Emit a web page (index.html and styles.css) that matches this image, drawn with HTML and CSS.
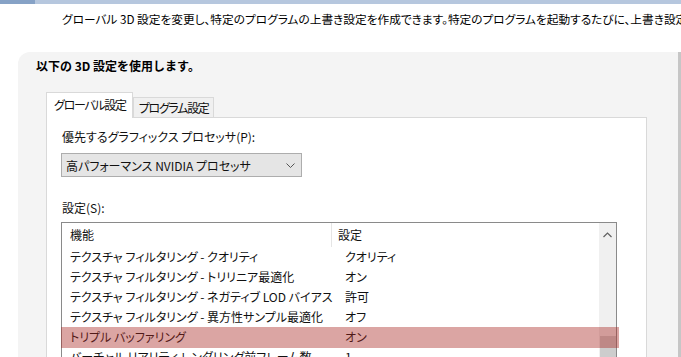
FILE: index.html
```html
<!DOCTYPE html>
<html lang="ja">
<head>
<meta charset="utf-8">
<link rel="stylesheet" href="styles.css">
</head>
<body>
<div class="topbar"><div class="topbar-dark"></div></div>
<p class="desc">グローバル 3D 設定を変更し、特定のプログラムの上書き設定を作成できます。特定のプログラムを起動するたびに、上書き設定が自動的に使用されます。</p>
<div class="panel">
  <h2 class="panel-title">以下の 3D 設定を使用します。</h2>
  <div class="tabs">
    <div class="tab active">グローバル設定</div>
    <div class="tab">プログラム設定</div>
  </div>
  <div class="tabpage">
    <label class="label">優先するグラフィックス プロセッサ(P):</label>
    <div class="select">
      <span>高パフォーマンス NVIDIA プロセッサ</span>
      <svg class="chev" width="9" height="6" viewBox="0 0 9 6"><polyline points="0.5,0.5 4.5,4.5 8.5,0.5" fill="none" stroke="#555" stroke-width="1"/></svg>
    </div>
    <label class="label label-s">設定(S):</label>
    <div class="list">
      <div class="list-body">
        <div class="row head"><div class="c1">機能</div><div class="c2">設定</div></div>
        <div class="row"><div class="c1">テクスチャ フィルタリング - クオリティ</div><div class="c2">クオリティ</div></div>
        <div class="row"><div class="c1">テクスチャ フィルタリング - トリリニア最適化</div><div class="c2">オン</div></div>
        <div class="row"><div class="c1">テクスチャ フィルタリング - ネガティブ LOD バイアス</div><div class="c2">許可</div></div>
        <div class="row"><div class="c1">テクスチャ フィルタリング - 異方性サンプル最適化</div><div class="c2">オフ</div></div>
        <div class="row"><div class="c1">トリプル バッファリング</div><div class="c2">オン</div></div>
        <div class="row"><div class="c1">バーチャル リアリティ レンダリング前フレーム数</div><div class="c2">1</div></div>
      </div>
      <div class="scrollbar">
        <svg class="up" width="9" height="6" viewBox="0 0 9 6"><polyline points="0.5,5 4.5,1 8.5,5" fill="none" stroke="#606060" stroke-width="1.2"/></svg>
        <div class="thumb"></div>
      </div>
      <div class="highlight"></div>
    </div>
  </div>
</div>
</body>
</html>
```
FILE: styles.css
```css
html, body {
  margin: 0;
  padding: 0;
}
body {
  width: 681px;
  height: 357px;
  overflow: hidden;
  background: #ffffff;
  font-family: "Noto Sans CJK JP", "Noto Sans", sans-serif;
  font-size: 12px;
  color: #111;
}
.topbar {
  height: 4px;
  background: #b6c7de;
  display: flex;
}
.topbar-dark {
  width: 35px;
  background: #86a2c6;
}
.desc {
  margin: 6px 0 0 62px;
  height: 17px;
  line-height: 17px;
  white-space: nowrap;
  overflow: hidden;
  font-size: 11.7px;
  font-feature-settings: "palt";
  color: #000;
}
.panel {
  margin: 25px 0 0 18px;
  height: 320px;
  background: #f4f4f4;
  border-top-left-radius: 12px;
  border-right: 3px solid #c6c6c6;
  display: flex;
  flex-direction: column;
}
.panel-title {
  margin: 0;
  padding: 5px 0 0 18px;
  height: 18px;
  line-height: 18px;
  font-size: 12px;
  font-weight: bold;
  color: #000;
}
.tabs {
  margin: 18px 0 0 28px;
  display: flex;
  align-items: flex-end;
  height: 24px;
  position: relative;
  z-index: 1;
}
.tab {
  height: 19px;
  line-height: 19px;
  padding: 0 4px 0 5px;
  border: 1px solid #d9d9d9;
  border-bottom: none;
  background: #f0f0f0;
  font-feature-settings: "palt";
  letter-spacing: -1.3px;
}
.tab.active {
  padding: 0 6px 0 7px;
  background: #ffffff;
  margin-bottom: -1px;
  height: 25px;
  line-height: 24px;
}
.tabpage {
  margin-left: 28px;
  width: 585px;
  flex: 1;
  background: #ffffff;
  border: 1px solid #d9d9d9;
  padding: 11px 0 0 14px;
}
.label {
  display: block;
  height: 16px;
  line-height: 16px;
  font-feature-settings: "palt";
  padding-left: 1px;
}
.select {
  margin-top: 8px;
  background: #e5e5e5;
  border: 1px solid #adadad;
  display: flex;
  align-items: center;
  justify-content: space-between;
  padding: 0 6px 0 4px;
  box-sizing: border-box;
  width: 241px;
  height: 24px;
  font-feature-settings: "palt";
}
.chev {
  margin-top: 1px;
}
.label-s {
  margin-top: 23px;
}
.list {
  margin-top: 6px;
  width: 556px;
  height: 160px;
  box-sizing: border-box;
  border: 1px solid #8a8a8a;
  display: flex;
  position: relative;
}
.list-body {
  flex: 1;
}
.row {
  display: flex;
  height: 20px;
  line-height: 20px;
  font-feature-settings: "palt";
}
.row.head {
  height: 24px;
  line-height: 24px;
}
.c1 {
  width: 269px;
  padding-left: 8px;
}
.c2 {
  padding-left: 6px;
}
.head .c1 {
  border-right: 1px solid #e5e5e5;
  width: 261px;
  height: 24px;
}
.scrollbar {
  width: 17px;
  background: #f0f0f0;
  display: flex;
  flex-direction: column;
  align-items: center;
}
.up {
  margin-top: 9px;
}
.thumb {
  margin-top: 98px;
  width: 16px;
  flex: 1;
  background: #cdcdcd;
}
.highlight {
  position: absolute;
  left: -1px;
  top: 104px;
  width: 558px;
  height: 21px;
  background: rgba(170, 40, 35, 0.42);
}
```
